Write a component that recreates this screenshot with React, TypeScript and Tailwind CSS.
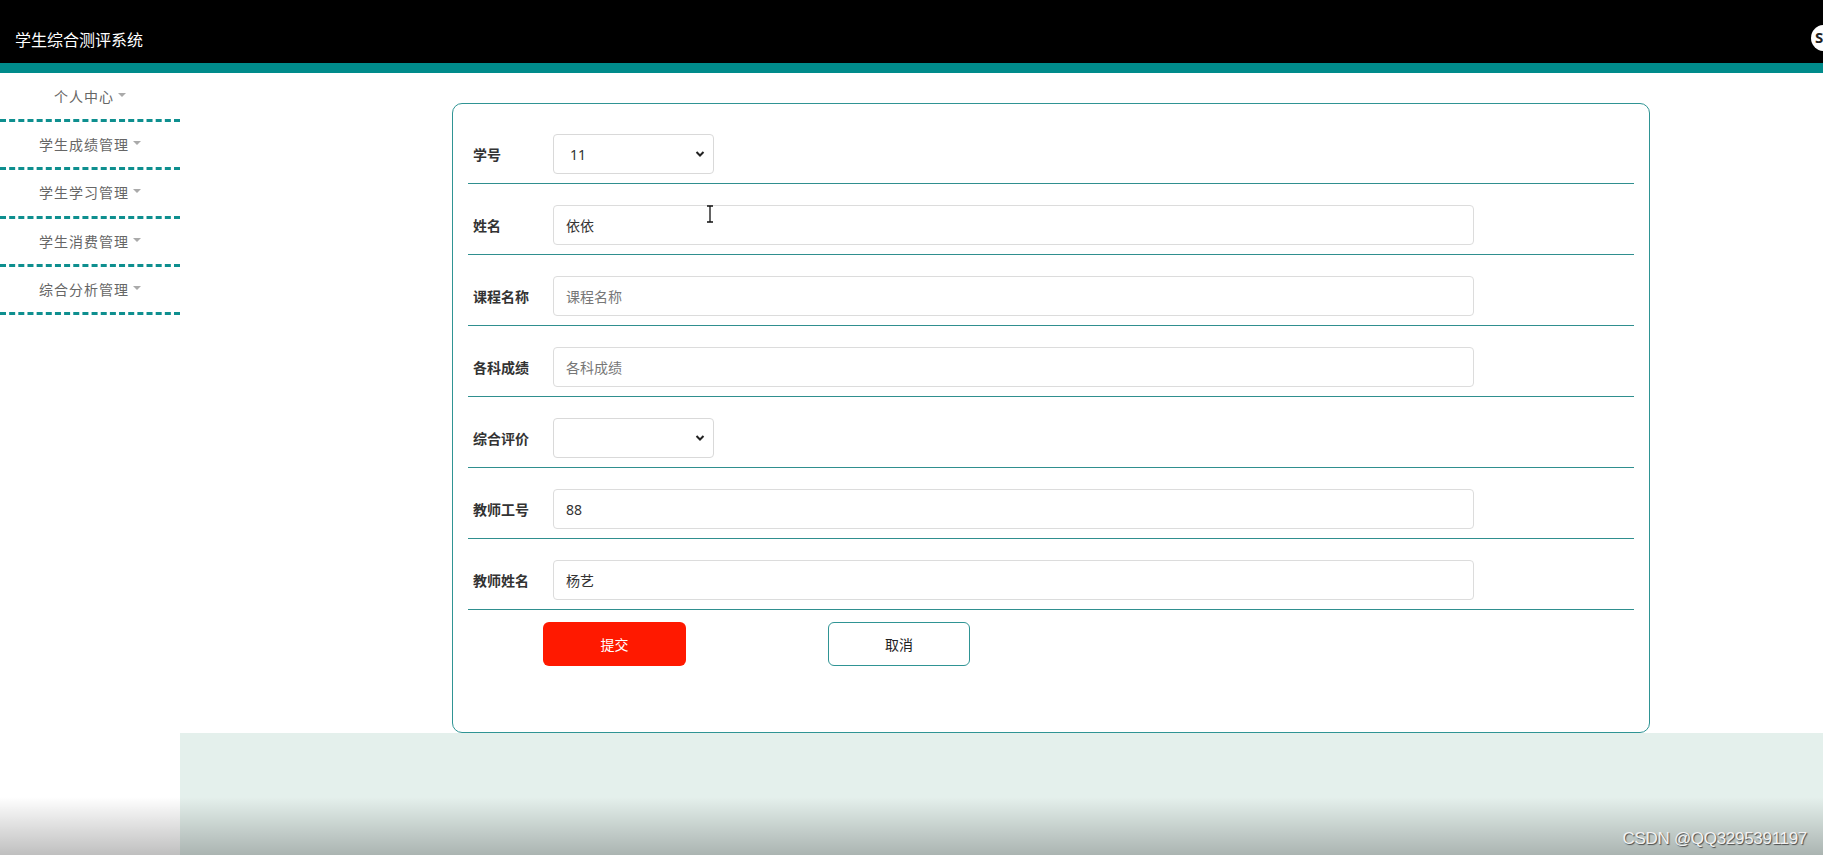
import React from "react";

const font = { fontFamily: '"Noto Sans", "Noto Sans CJK SC", sans-serif' };

const menu = ["个人中心", "学生成绩管理", "学生学习管理", "学生消费管理", "综合分析管理"];

type Row = { label: string; kind: "select" | "input"; value?: string; placeholder?: string };

const rows: Row[] = [
  { label: "学号", kind: "select", value: "11" },
  { label: "姓名", kind: "input", value: "依依" },
  { label: "课程名称", kind: "input", placeholder: "课程名称" },
  { label: "各科成绩", kind: "input", placeholder: "各科成绩" },
  { label: "综合评价", kind: "select", value: "" },
  { label: "教师工号", kind: "input", value: "88" },
  { label: "教师姓名", kind: "input", value: "杨艺" },
];

function Chevron() {
  return (
    <svg
      className="absolute right-[8px] top-1/2 -translate-y-1/2 pointer-events-none"
      width="10"
      height="7"
      viewBox="0 0 10 7"
    >
      <path d="M1.5 1.5 L5 5 L8.5 1.5" fill="none" stroke="#222" strokeWidth="2" />
    </svg>
  );
}

export default function App() {
  return (
    <div
      className="relative w-[1823px] h-[855px] overflow-hidden flex flex-col bg-white"
      style={font}
    >
      <header className="h-[63px] bg-black flex items-center justify-between pt-[16px] pl-[15px] shrink-0">
        <span className="text-white text-[16px] leading-none">学生综合测评系统</span>
        <div className="w-[26px] h-[26px] rounded-full bg-white mr-[-14px] mt-[-4px] flex items-center pl-[4px] text-[15px] font-bold text-[#222] leading-none">
          S
        </div>
      </header>
      <div className="h-[10px] bg-[#008b8b] shrink-0" />
      <div className="flex flex-1 min-h-0">
        <aside className="w-[180px] shrink-0 bg-white pt-[0.5px]">
          {menu.map((m) => (
            <div
              key={m}
              className="h-[48.4px] border-b-[3px] border-dashed border-[#0e8f8f] flex items-center justify-center text-[14px] tracking-[1px] text-[#666]"
            >
              <span>{m}</span>
              <span className="ml-[4px] mb-[3px] w-0 h-0 border-l-[4px] border-r-[4px] border-t-[4px] border-l-transparent border-r-transparent border-t-[#aaa]" />
            </div>
          ))}
        </aside>
        <main className="flex-1 flex flex-col">
          <div className="pt-[30px] pl-[272px]">
            <div className="w-[1198px] h-[630px] border border-[#2f9494] rounded-[10px] pt-[9px] px-[15px]">
              {rows.map((r) => (
                <div
                  key={r.label}
                  className="h-[71px] pt-[21px] pb-[9px] border-b border-[#2f8f8f] flex items-center pl-[5px]"
                >
                  <div className="w-[80px] shrink-0 text-[14px] font-bold text-[#333]">{r.label}</div>
                  {r.kind === "select" ? (
                    <div className="relative w-[161px] h-[40px] border border-[#d9d9d9] rounded-[4px] bg-white flex items-center pl-[16px] text-[14px] text-[#333]">
                      <span>{r.value}</span>
                      <Chevron />
                    </div>
                  ) : (
                    <div className="w-[921px] h-[40px] border border-[#dcdcdc] rounded-[4px] bg-white flex items-center pl-[12px] text-[14px]">
                      {r.value ? (
                        <span className="text-[#333]">{r.value}</span>
                      ) : (
                        <span className="text-[#777]">{r.placeholder}</span>
                      )}
                    </div>
                  )}
                </div>
              ))}
              <div className="flex mt-[12px] pl-[75px] gap-[142px]">
                <div className="w-[143px] h-[44px] rounded-[6px] bg-[#ff1900] text-white text-[14px] flex items-center justify-center">
                  提交
                </div>
                <div className="w-[142px] h-[44px] rounded-[6px] bg-white border border-[#2f9494] text-[#222] text-[14px] flex items-center justify-center">
                  取消
                </div>
              </div>
            </div>
          </div>
          <div className="flex-1 bg-[#e4f0ec]" />
        </main>
      </div>

      {/* mouse cursor */}
      <svg className="absolute left-[706px] top-[205px] pointer-events-none" width="8" height="18" viewBox="0 0 8 18">
        <path d="M1 1 H7 M4 1 V17 M1 17 H7" stroke="#111" strokeWidth="1.3" fill="none" />
      </svg>

      {/* bottom video-style shade */}
      <div className="absolute left-0 right-0 bottom-0 h-[58px] bg-gradient-to-b from-transparent to-black/25 pointer-events-none" />

      <div
        className="absolute right-[16px] bottom-[8px] text-[17px] text-[#f2f2f2] leading-none tracking-[-0.3px]"
        style={{ fontFamily: '"Liberation Sans", Arial, sans-serif', textShadow: "1px 1px 1px rgba(60,60,60,0.9)" }}
      >
        CSDN @QQ3295391197
      </div>
    </div>
  );
}
